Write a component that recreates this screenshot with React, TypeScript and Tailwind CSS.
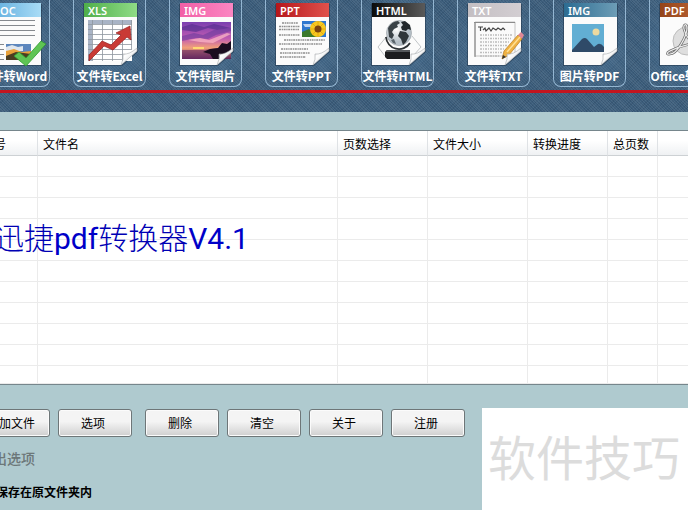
import type { ReactNode } from "react";

// ── Data ──────────────────────────────────────────────────────────────────────

type Kind = "doc" | "xls" | "photo" | "ppt" | "html" | "txt" | "img" | "pdf";

const TOOLS: { kind: Kind; tag: string; label: string; from: string; to: string }[] = [
    { kind: "doc", tag: "DOC", label: "文件转Word", from: "#5aa9dc", to: "#a9dcf6" },
    { kind: "xls", tag: "XLS", label: "文件转Excel", from: "#4fae4a", to: "#8fdc86" },
    { kind: "photo", tag: "IMG", label: "文件转图片", from: "#f25fa6", to: "#fb86c2" },
    { kind: "ppt", tag: "PPT", label: "文件转PPT", from: "#b5161b", to: "#e0524c" },
    { kind: "html", tag: "HTML", label: "文件转HTML", from: "#0b0b0b", to: "#5a5a5a" },
    { kind: "txt", tag: "TXT", label: "文件转TXT", from: "#c4bfc3", to: "#d3ced2" },
    { kind: "img", tag: "IMG", label: "图片转PDF", from: "#2c6c92", to: "#6d9db6" },
    { kind: "pdf", tag: "PDF", label: "Office转PDF", from: "#94441a", to: "#c46c3c" },
];

const COLUMNS = [
    { title: "序号", width: "w-[61px]" },
    { title: "文件名", width: "w-[300px]" },
    { title: "页数选择", width: "w-[90px]" },
    { title: "文件大小", width: "w-[100px]" },
    { title: "转换进度", width: "w-[80px]" },
    { title: "总页数", width: "w-[50px]" },
    { title: "", width: "" },
];

const ROWS = Array.from({ length: 11 }, (_, i) => i);

// ── Icon art ──────────────────────────────────────────────────────────────────

const ART: Record<Kind, ReactNode> = {
    doc: (
        <>
            <path d="M5 17.500H47M5 22.500H47M5 27.500H47M5 32.500H47M5 41.500H16M5 46.500H16M5 51.500H16M5 56.500H16" stroke="#85898e" />
            <rect x="18" y="41" width="25" height="16" fill="#5c86bd" />
            <path d="M18 44l6-2 6 2 5-1v5H18z" fill="#dfe6ee" />
            <path d="M18 48l8-2 8 3 9-1v5H18z" fill="#e9a13a" />
            <path d="M18 53l10-4 15 2v6H18z" fill="#4b3d22" />
        </>
    ),
    xls: (
        <>
            <rect x="4" y="17" width="44" height="41" fill="#fff" />
            <path d="M4 17h44v4H4zM4 17h4v41H4z" fill="#a9b4c6" />
            <path d="M4 21.500H48M4 26.500H48M4 31.500H48M4 36.500H48M4 41.500H48M4 46.500H48M4 51.500H44M4 56.500H38M8.500 17V58M18.500 17V58M28.500 17V58M38.500 17V58M47.500 17V46" stroke="#8e969e" strokeWidth=".8" />
            <path d="M5 58V52L18 38l9 4 10-10-5-2 14-7 1 14-4-3-14 13-9-4z" fill="#c93a35" stroke="#96201f" strokeWidth=".7" />
        </>
    ),
    photo: (
        <>
            <rect x="2" y="19" width="49" height="37" fill="url(#sunset)" />
            <path d="M2 24l10-3 12 3 10-3 17 4-14 2-9-2-12 4-14-2z" fill="#4e2d8c" opacity=".6" />
            <path d="M2 33l12-3 9 2 11-5 17-2v3l-15 4-8 4-12-1-14 3z" fill="#6d3c9e" opacity=".6" />
            <path d="M8 37l12-2 9 2 18-7 4 1-18 9-13-1z" fill="#fbb6c4" opacity=".75" />
            <path d="M2 47h22l14-2v11H2z" fill="#6a2b66" opacity=".6" />
            <path d="M23 49l7-3 8-1 4-5 5 1 4-3v10l-9 8H33l-3-5z" fill="#1b0d20" />
            <path d="M13 44h11v2H13z" fill="#ffd873" />
        </>
    ),
    ppt: (
        <>
            <rect x="26" y="18" width="24" height="16" fill="#2e77cf" />
            <path d="M26 29l7-3 8 8H26z" fill="#3c7a2c" />
            <path d="M27 21h8l3 3h-9z" fill="#fff" opacity=".7" />
            <circle cx="42" cy="26" r="8" fill="#f7c81e" />
            <path d="M34 26h16M42 18v16M36 20l12 12M48 20L36 32" stroke="#e0a010" strokeWidth=".8" />
            <circle cx="42" cy="26" r="3.500" fill="#7a4310" />
            <path d="M6 20H22M3 23.500H24M3 26.500H23M3 32H24M8 37H49M3 41H46M5 46H32M4 50H34M4 54H30" stroke="#8f8f8f" strokeWidth="1.600" strokeDasharray="2 .7 1.300 .6" />
        </>
    ),
    html: (
        <>
            <path d="M15 33L6 44l7 9M40 33l9 11-8 9" fill="none" stroke="#c2c6c9" />
            <path d="M14 34a13 13 0 0 0 24 6" fill="none" stroke="#2c3134" strokeWidth="1.800" />
            <circle cx="27" cy="30" r="12.500" fill="url(#globe)" stroke="#9ba2a7" strokeWidth=".7" />
            <path d="M16 25q4-7 10-7l2 2-3 2 1 2-4 2-2 3 2 3-2 4-3-2z" fill="#3a4247" />
            <path d="M29 19l4-1 5 4 1 5-3-1-2 2-4-1-1-3 2-2z" fill="#22282c" />
            <path d="M28 28l6 1 3 4-3 6-3 3-2-6-3-3z" fill="#2f363a" />
            <path d="M19 37l3-1 2 5-3-1z" fill="#59636a" />
            <path d="M15 47h23v9H15l-2-2v-5z" fill="#1c1d1f" />
            <path d="M15 47h23v2H14z" fill="#55585b" />
        </>
    ),
    txt: (
        <>
            <path d="M7 19h40v34H7z" fill="#fafafa" stroke="#c4c4c4" />
            <path d="M6 19.500H47M7 19v35" stroke="#8b8b8b" strokeWidth="1.200" />
            <path d="M10 24h5M12.500 24v4M15 27l2-2 1 3 3-3 2 3 2-3 3 2 2-2 3 2 2-2 2 2" fill="none" stroke="#444" strokeWidth="1.200" />
            <path d="M12 32H44M12 35.500H43M12 39H42M12 42.500H40M12 46H37M12 49.500H34M12 53H32" stroke="#bdbdbd" strokeWidth="1.300" strokeDasharray="2 1 1 1" />
            <path d="M34 56l2-8 14-16 4 4-13 16z" fill="#efb243" stroke="#b87a1c" strokeWidth=".7" />
            <path d="M50 32l3-3 3 3-2 4z" fill="#df8796" />
            <path d="M34 56l1-4 3 2z" fill="#333" />
            <path d="M39 49l13-15" stroke="#ffe095" strokeWidth="1.500" />
        </>
    ),
    img: (
        <>
            <rect x="8" y="21" width="32" height="28" fill="#62aed3" />
            <circle cx="32" cy="29" r="3.500" fill="#ecd9a0" />
            <path d="M8 47l10-11q3-2 5 0l7 8 4-3q3-1 6 3v5H8z" fill="#2f4a68" />
        </>
    ),
    pdf: (
        <>
            <circle cx="27" cy="38" r="14" fill="#dedede" stroke="#bdbdbd" />
            <path d="M10 51c7 0 17-18 17-26 0-5-4-4-3 1 2 10 12 18 20 18 5 0 3-4-2-4-13 0-24 4-32 8-4 2-3 4 0 3z" fill="none" stroke="#6f6f6f" strokeWidth="2.600" />
            <path d="M10 51c7 0 17-18 17-26 0-5-4-4-3 1 2 10 12 18 20 18 5 0 3-4-2-4-13 0-24 4-32 8-4 2-3 4 0 3z" fill="none" stroke="#eeeeee" strokeWidth="1.200" />
        </>
    ),
};

function IconDefs() {
    return (
        <svg className="absolute" width="0" height="0" aria-hidden="true">
            <defs>
                <linearGradient id="sunset" x2="0" y2="1">
                    <stop offset="0" stopColor="#7a3fb0" />
                    <stop offset=".45" stopColor="#c25cb0" />
                    <stop offset=".7" stopColor="#f2a079" />
                    <stop offset="1" stopColor="#5a2358" />
                </linearGradient>
                <radialGradient id="globe" cx=".4" cy=".35">
                    <stop offset="0" stopColor="#ffffff" />
                    <stop offset="1" stopColor="#b6c0c8" />
                </radialGradient>
                <linearGradient id="curl" x2="1" y2="1">
                    <stop offset="0" stopColor="#b9bcbf" />
                    <stop offset=".35" stopColor="#ffffff" />
                    <stop offset="1" stopColor="#cfd2d4" />
                </linearGradient>
            </defs>
        </svg>
    );
}

function DocIcon({ kind, tag, from, to }: { kind: Kind; tag: string; from: string; to: string }) {
    // the Word sheet is flat, all others have a curled corner
    const flat = kind === "doc";
    return (
        <svg width="53" height="62" viewBox="0 0 53 62" className="ml-0.5 overflow-visible" aria-hidden="true">
            <defs>
                <linearGradient id={`head-${kind}`}>
                    <stop offset="0" stopColor={from} />
                    <stop offset="1" stopColor={to} />
                </linearGradient>
            </defs>
            <path d={flat ? "M-1 1h55v62H-1z" : "M-1 1h55v48L38 63H-1z"} fill="#16293c" opacity=".45" />
            <path d={flat ? "M0 0h53v62H0z" : "M0 0h53v48L37 62H0z"} fill="#fbfbfb" />
            <rect width="53" height="14" fill={`url(#head-${kind})`} />
            {ART[kind]}
            {!flat && <path d="M37 62q3-6 2-11 6 1 14-6v3z" fill="url(#curl)" stroke="#a4a8ab" strokeWidth=".6" />}
            {flat && <path d="M26 53l5-4 7 6 15-17 5 3-20 22z" fill="#5fc454" stroke="#2f9a30" strokeWidth=".8" />}
            <text x="4" y="12" fill="#fff" className="font-['Noto_Sans'] text-[11px] font-semibold">{tag}</text>
        </svg>
    );
}

// ── Toolbar ───────────────────────────────────────────────────────────────────

function Toolbar() {
    return (
        <header className="overflow-hidden bg-[#3b5c7a] bg-[repeating-linear-gradient(45deg,#ffffff14_0_1px,transparent_1px_2px),repeating-linear-gradient(-45deg,#0b22381f_0_1px,transparent_1px_3px)]">
            <nav className="-ml-[23px] flex gap-[23px]">
                {TOOLS.map(t => (
                    <button
                        key={t.label}
                        className="flex w-[73px] shrink-0 flex-col items-center rounded-b-lg border-x border-b border-[#94b6d2] bg-radial from-[#5580a5]/60 to-transparent pt-[3px] pb-0.5"
                    >
                        <DocIcon kind={t.kind} tag={t.tag} from={t.from} to={t.to} />
                        <span className="mt-[3px] font-['Noto_Sans_CJK_SC',sans-serif] text-xs leading-4 font-bold whitespace-nowrap text-white">{t.label}</span>
                    </button>
                ))}
            </nav>
            <div className="mt-[3px] h-[3px] bg-[#c3151f]" />
            <div className="h-[19px]" />
        </header>
    );
}

// ── File list ─────────────────────────────────────────────────────────────────

function FileList() {
    return (
        <main className="relative mt-[18px] overflow-hidden border-y border-[#76868c] bg-white">
            <div className="-ml-[23px]">
                <table className="w-full table-fixed border-separate border-spacing-0 text-xs text-black">
                    <thead>
                        <tr className="h-[25px]">
                            {COLUMNS.map((c, i) => (
                                <th
                                    key={i}
                                    className={`${c.width} border-r border-b border-r-[#dfe2e5] border-b-[#cdd1d4] bg-linear-to-b from-white from-40% to-[#eff1f3] p-0 pt-1 pl-[5px] text-left font-normal whitespace-nowrap last:border-r-0`}
                                >
                                    {c.title}
                                </th>
                            ))}
                        </tr>
                    </thead>
                    <tbody>
                        {ROWS.map(r => (
                            <tr key={r} className="h-[21px] last:h-[18px]">
                                {COLUMNS.map((_, i) => (
                                    <td key={i} className="border-r border-b border-[#ebebeb] p-0 last:border-r-0" />
                                ))}
                            </tr>
                        ))}
                    </tbody>
                </table>
            </div>
            <h1 className="absolute top-[86px] -left-[6px] font-[Roboto,'Noto_Sans_CJK_SC',sans-serif] text-[30px] leading-[44px] font-light whitespace-nowrap text-[#0000b4]">
                迅捷<span className="font-normal text-[#0000c8]">pdf</span>转换器<span className="font-normal text-[#0000c8]">V4.1</span>
            </h1>
        </main>
    );
}

// ── Footer ────────────────────────────────────────────────────────────────────

function ActionButton({ children }: { children: ReactNode }) {
    return (
        <button className="h-7 w-[74px] shrink-0 rounded-[3px] border border-[#6e7678] bg-linear-to-b from-[#f4f4f4] from-45% to-[#cfcfcf] pt-0.5 pr-1 text-xs text-black shadow-[inset_0_0_0_1px_#fbfbfb]">
            {children}
        </button>
    );
}

function Footer() {
    return (
        <footer className="flex flex-1 justify-between overflow-hidden">
            <div className="-ml-6 pt-6">
                <div className="flex gap-[13px]">
                    <div className="flex gap-2">
                        <ActionButton>添加文件</ActionButton>
                        <ActionButton>选项</ActionButton>
                    </div>
                    <div className="flex gap-2">
                        <ActionButton>删除</ActionButton>
                        <ActionButton>清空</ActionButton>
                        <ActionButton>关于</ActionButton>
                        <ActionButton>注册</ActionButton>
                    </div>
                </div>
                <fieldset className="mt-3 pl-[3px]">
                    <legend className="text-sm leading-5 font-medium text-[#6c7779]">输出选项</legend>
                    <label className="mt-4 flex items-center gap-1 text-xs leading-4 font-bold text-black">
                        <input type="radio" name="output" defaultChecked className="size-[13px]" />
                        保存在原文件夹内
                    </label>
                </fieldset>
            </div>
            <div className="mt-[23px] w-[206px] shrink-0 bg-white pt-4 pl-1.5 text-5xl leading-[68px] whitespace-nowrap text-[#dcdcdc]">
                软件技巧
            </div>
        </footer>
    );
}

export default function App() {
    return (
        <div className="flex min-h-screen flex-col bg-[#afcacf] font-['Noto_Sans','Noto_Sans_CJK_SC',sans-serif]">
            <IconDefs />
            <Toolbar />
            <FileList />
            <Footer />
        </div>
    );
}
